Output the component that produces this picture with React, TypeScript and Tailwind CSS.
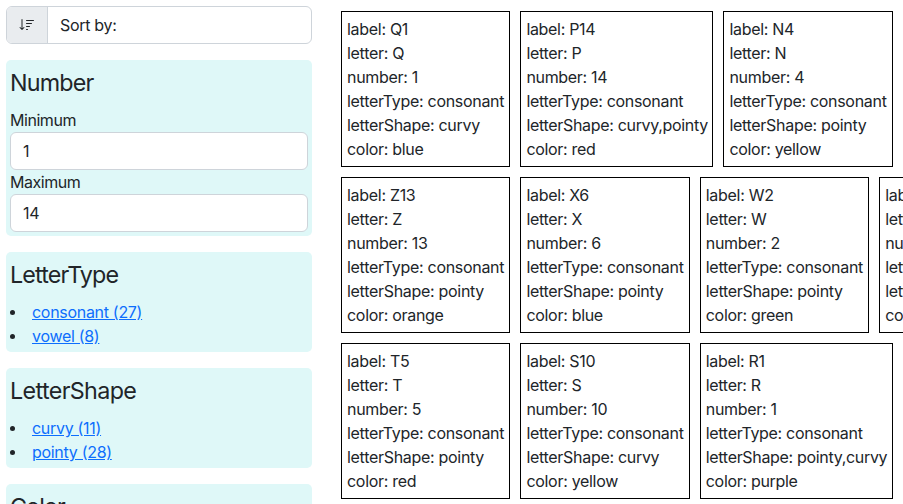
import type { ReactNode } from "react";
import { BsSortDown } from "react-icons/bs";

type Item = {
  label: string;
  letter: string;
  number: number;
  letterType: string;
  letterShape: string;
  color: string;
};

const c = (label: string, letterShape: string, color: string, letterType = "consonant"): Item => ({
  label,
  letter: label[0],
  number: Number(label.slice(1)),
  letterType,
  letterShape,
  color,
});

const rows: Item[][] = [
  [c("Q1", "curvy", "blue"), c("P14", "curvy,pointy", "red"), c("N4", "pointy", "yellow")],
  [c("Z13", "pointy", "orange"), c("X6", "pointy", "blue"), c("W2", "pointy", "green"), c("V9", "pointy", "red")],
  [c("T5", "pointy", "red"), c("S10", "curvy", "yellow"), c("R1", "pointy,curvy", "purple")],
];

function Card({ item }: { item: Item }) {
  const wide = item.letterShape.includes(",");
  return (
    <div
      className={`shrink-0 whitespace-nowrap border border-black p-[5px] ${
        wide ? "w-[193px] tracking-[-0.32px]" : "w-[169.4px]"
      }`}
    >
      {Object.entries(item).map(([key, value]) => (
        <div key={key}>
          {key}: {value}
        </div>
      ))}
    </div>
  );
}

const headingTracking: Record<string, string> = {
  Number: "tracking-[-0.8px]",
  LetterType: "tracking-[-0.85px]",
  LetterShape: "tracking-[-0.63px]",
  Color: "tracking-[-0.9px]",
};

function Panel({ title, children }: { title: string; children?: ReactNode }) {
  return (
    <section className="rounded-[5px] bg-[#dff8f8] p-1">
      <h4 className={`mt-1 mb-[11px] text-[23.3px] leading-[29px] ${headingTracking[title]}`}>{title}</h4>
      {children}
    </section>
  );
}

function Field({ label, value }: { label: string; value: string }) {
  return (
    <label className="block">
      <span className="block tracking-[-0.45px]">{label}</span>
      <input
        className="block h-[38px] w-full rounded-md border border-[#ced4da] bg-white px-3 outline-none"
        defaultValue={value}
      />
    </label>
  );
}

function Facet({ title, options }: { title: string; options: string[] }) {
  return (
    <Panel title={title}>
      <ul>
        {options.map((o) => (
          <li key={o} className="flex items-center">
            <span className="mr-[17px] size-[5px] rounded-full bg-[#212529]" />
            <a href="#" className="text-[#0d6efd] underline">
              {o}
            </a>
          </li>
        ))}
      </ul>
    </Panel>
  );
}

export default function App() {
  return (
    <div className="flex h-[504px] w-[903px] overflow-hidden bg-white font-['Inter',sans-serif] text-[16px] leading-[24px] tracking-[-0.3px] text-[#212529]">
      <aside className="ml-1.5 mt-1.5 flex w-[306px] shrink-0 flex-col gap-4">
        <div className="flex h-[38px] shrink-0 overflow-hidden rounded-md border border-[#ced4da]">
          <div className="flex w-[41px] items-center justify-center border-r border-[#ced4da] bg-[#e9ecef]">
            <BsSortDown size={16} />
          </div>
          <div className="flex items-center px-3">Sort by:</div>
        </div>
        <Panel title="Number">
          <Field label="Minimum" value="1" />
          <Field label="Maximum" value="14" />
        </Panel>
        <Facet title="LetterType" options={["consonant (27)", "vowel (8)"]} />
        <Facet title="LetterShape" options={["curvy (11)", "pointy (28)"]} />
        <Panel title="Color" />
      </aside>
      <main className="ml-[29px] mt-[11px] flex flex-col gap-[10px]">
        {rows.map((row, i) => (
          <div key={i} className="flex gap-[10px]">
            {row.map((item) => (
              <Card key={item.label} item={item} />
            ))}
          </div>
        ))}
      </main>
    </div>
  );
}
